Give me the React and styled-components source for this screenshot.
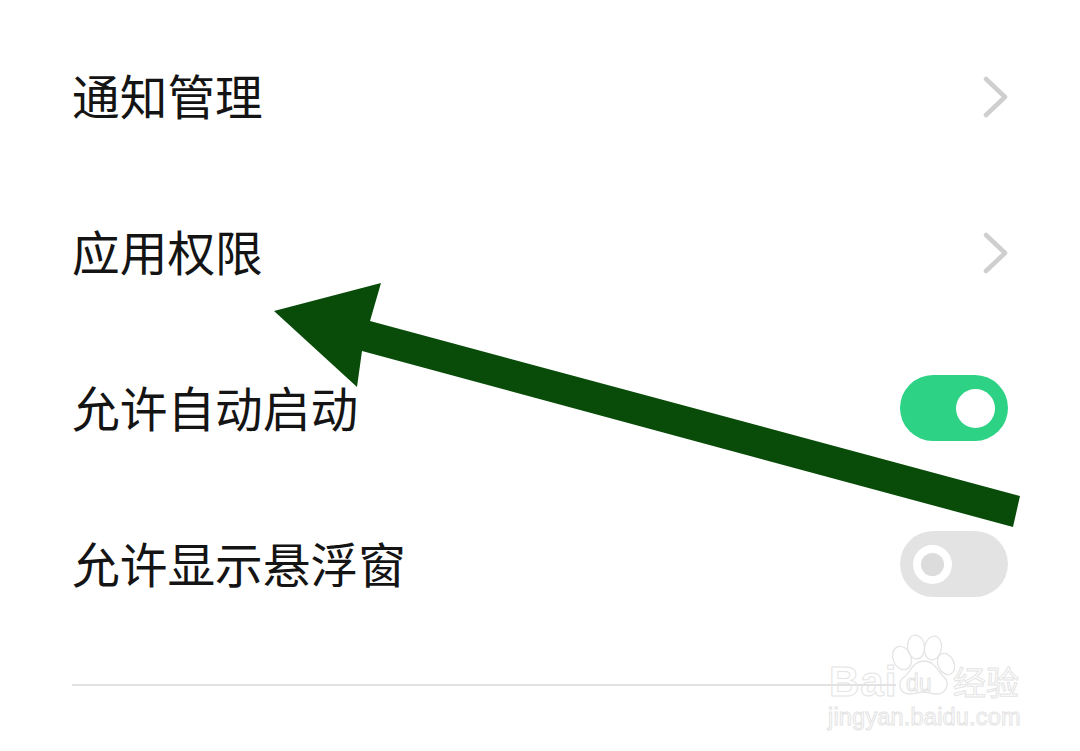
import React from "react";
import styled, { createGlobalStyle } from "styled-components";

const Global = createGlobalStyle`
  html, body { margin: 0; padding: 0; background: #fff; }
  body { font-family: "Noto Sans CJK SC", "Noto Sans", sans-serif; }
`;

const Page = styled.div`
  position: relative;
  width: 1080px;
  height: 751px;
  overflow: hidden;
  background: #fff;
  padding: 18px 72px 0;
  box-sizing: border-box;
`;

const List = styled.div`
  display: flex;
  flex-direction: column;
`;

const Row = styled.div`
  height: 156px;
  display: flex;
  align-items: center;
  justify-content: space-between;
`;

const Label = styled.span`
  font-size: 47.7px;
  line-height: 60px;
  padding-bottom: 2px;
  font-weight: 400;
  color: #141414;
`;

const Chevron = styled.svg`
  width: 26px;
  height: 44px;
  fill: none;
  stroke: #cfcfcf;
  stroke-width: 4.5;
  stroke-linecap: round;
  stroke-linejoin: round;
`;

const Track = styled.div`
  width: 108px;
  height: 66px;
  border-radius: 33px;
  background: ${(p) => (p.$on ? "#2dd285" : "#e3e3e3")};
  display: flex;
  align-items: center;
  justify-content: ${(p) => (p.$on ? "flex-end" : "flex-start")};
  padding: 0 13px;
  box-sizing: border-box;
`;

const Knob = styled.div`
  width: ${(p) => (p.$on ? "39px" : "23px")};
  height: ${(p) => (p.$on ? "39px" : "23px")};
  border-radius: 50%;
  box-sizing: content-box;
  background: ${(p) => (p.$on ? "#fff" : "#dcdcdc")};
  border: ${(p) => (p.$on ? "0" : "8px solid #fff")};
`;

const Divider = styled.div`
  height: 2px;
  width: 824px;
  margin-top: 42px;
  background: #e2e2e2;
`;

const Overlay = styled.svg`
  position: absolute;
  left: 0;
  top: 0;
  width: 1080px;
  height: 751px;
  pointer-events: none;
`;

const Arrow = styled.polygon`
  fill: #094c0a;
`;

const Logo = styled.g`
  fill: none;
  stroke: #e4e4e4;
  stroke-width: 1.3;
`;

const LogoText = styled.text`
  font-family: ${(p) => p.$font || '"Liberation Sans", sans-serif'};
  font-size: ${(p) => p.$size}px;
  font-weight: ${(p) => p.$weight || 400};
  letter-spacing: ${(p) => p.$track || 0}px;
  stroke-width: 1;
`;

const rows = [
  { label: "通知管理", kind: "link" },
  { label: "应用权限", kind: "link" },
  { label: "允许自动启动", kind: "on" },
  { label: "允许显示悬浮窗", kind: "off" },
];

export default function App() {
  return (
    <Page>
      <Global />
      <List>
        {rows.map((r) => (
          <Row key={r.label}>
            <Label>{r.label}</Label>
            {r.kind === "link" ? (
              <Chevron viewBox="0 0 26 44">
                <path d="M4 5 L23 23 L4 41" />
              </Chevron>
            ) : (
              <Track $on={r.kind === "on"}>
                <Knob $on={r.kind === "on"} />
              </Track>
            )}
          </Row>
        ))}
      </List>
      <Divider />
      <Overlay viewBox="0 0 1080 751">
        <Arrow points="274,311 381,283 370,321 1020,496 1013,527 362,351 357,387" />
        <Logo transform="translate(826 634)">
          <g transform="translate(64 0)">
            <ellipse cx="12" cy="24" rx="9" ry="12" transform="rotate(-22 12 24)" />
            <ellipse cx="26" cy="13" rx="8.5" ry="12" transform="rotate(-6 26 13)" />
            <ellipse cx="43" cy="14" rx="8.5" ry="12" transform="rotate(10 43 14)" />
            <ellipse cx="56" cy="30" rx="8" ry="11" transform="rotate(-25 56 30)" />
            <path d="M34 27 C45 27 48 38 54 43 C60 49 57 60 46 60 C40 60 38 58 33 58 C28 58 26 60 20 60 C9 60 7 48 14 43 C21 38 23 27 34 27 Z" />
          </g>
          <LogoText x="3" y="61.6" $size={42} $weight={700} $track={1}>Bai</LogoText>
          <LogoText x="80" y="56.5" $size={23}>du</LogoText>
          <LogoText x="127" y="61" $size={33} $font={'"Noto Sans CJK SC", sans-serif'}>经验</LogoText>
          <LogoText x="2" y="91" $size={23.5} $track={0.2}>jingyan.baidu.com</LogoText>
        </Logo>
      </Overlay>
    </Page>
  );
}
